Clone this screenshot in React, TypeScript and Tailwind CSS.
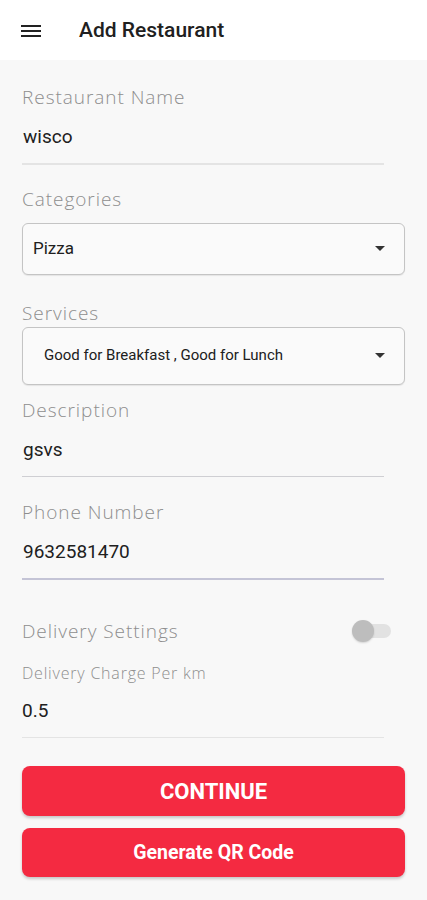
const LABEL = 'font-["Open_Sans",sans-serif] font-light text-[#8e8e8e] tracking-[0.05em]';
const VALUE = 'font-["Roboto",sans-serif] text-[#202020]';

function Caret() {
  return (
    <svg width="10" height="5" viewBox="0 0 10 5" className="shrink-0">
      <path d="M0 0h10L5 5z" fill="#333" />
    </svg>
  );
}

function TextField({ label, value, line }: { label: string; value: string; line: string }) {
  return (
    <div>
      <div className={`${LABEL} text-[19px] leading-[24px]`}>{label}</div>
      <div className={`${VALUE} text-[19px] leading-[24px] mt-[16px] pl-[1px]`}>{value}</div>
      <div className={`mt-[14px] w-[362px] h-[1.5px] ${line}`} />
    </div>
  );
}

export default function App() {
  return (
    <div className="w-[427px] min-h-[900px] bg-[#f8f8f8]">
      <header className="h-[60px] bg-white flex items-center">
        <div className="ml-[21px] w-[20px] flex flex-col gap-[3px] mt-[1px]">
          <span className="h-[2px] bg-[#222]" />
          <span className="h-[2px] bg-[#222]" />
          <span className="h-[2px] bg-[#222]" />
        </div>
        <h1 className={`ml-[38px] ${VALUE} text-[21px] font-medium text-[#111] mt-[2px]`}>Add Restaurant</h1>
      </header>

      <main className="px-[22px] pt-[25px]">
        <TextField label="Restaurant Name" value="wisco" line="bg-[#e4e4e4]" />
        <div className="mt-[22px]">
          <div className={`${LABEL} text-[19px] leading-[24px]`}>Categories</div>
          <div className="mt-[12px] h-[52px] flex items-center justify-between bg-[#fafafa] border border-[#c4c4c4] rounded-[6px] shadow-[0_1px_1px_rgba(0,0,0,0.08)] pl-[10px] pr-[19px]">
            <span className={`${VALUE} text-[17px] text-[#333]`}>Pizza</span>
            <Caret />
          </div>
        </div>
        <div className="mt-[26px]">
          <div className={`${LABEL} text-[19px] leading-[24px]`}>Services</div>
          <div className="mt-[2px] h-[58px] flex items-center justify-between bg-[#fafafa] border border-[#c4c4c4] rounded-[6px] shadow-[0_1px_1px_rgba(0,0,0,0.08)] pl-[21px] pr-[19px]">
            <span className={`${VALUE} text-[15px] text-[#333]`}>Good for Breakfast , Good for Lunch</span>
            <Caret />
          </div>
        </div>
        <div className="mt-[13px]">
          <TextField label="Description" value="gsvs" line="bg-[#cfcfd3]" />
        </div>
        <div className="mt-[23px]">
          <TextField label="Phone Number" value="9632581470" line="bg-[#c4c4d6]" />
        </div>

        <div className="mt-[39px] flex items-center justify-between pr-[14px]">
          <span className={`${LABEL} text-[19px] leading-[24px]`}>Delivery Settings</span>
          <div className="relative w-[36px] h-[14px] rounded-full bg-[#e2e2e2]">
            <span className="absolute left-[-3px] top-[-4px] w-[22px] h-[22px] rounded-full bg-[#bdbdbd] shadow-[0_1px_2px_rgba(0,0,0,0.15)]" />
          </div>
        </div>
        <div className={`mt-[20px] ${LABEL} text-[16px] leading-[20px]`}>Delivery Charge Per km</div>
        <div className={`${VALUE} text-[19px] leading-[24px] mt-[16px]`}>0.5</div>
        <div className="mt-[14px] w-[362px] h-[1.5px] bg-[#e4e4e4]" />

        <div className="mt-[28px] flex flex-col gap-[12px]">
          <button className="h-[50px] w-full rounded-[8px] bg-[#f42a41] text-white font-['Roboto',sans-serif] font-bold text-[22px] shadow-[0_2px_3px_rgba(0,0,0,0.2)]">
            CONTINUE
          </button>
          <button className="h-[49px] w-full rounded-[8px] bg-[#f42a41] text-white font-['Roboto',sans-serif] font-bold text-[19.5px] shadow-[0_2px_3px_rgba(0,0,0,0.2)]">
            Generate QR Code
          </button>
        </div>
      </main>
    </div>
  );
}
